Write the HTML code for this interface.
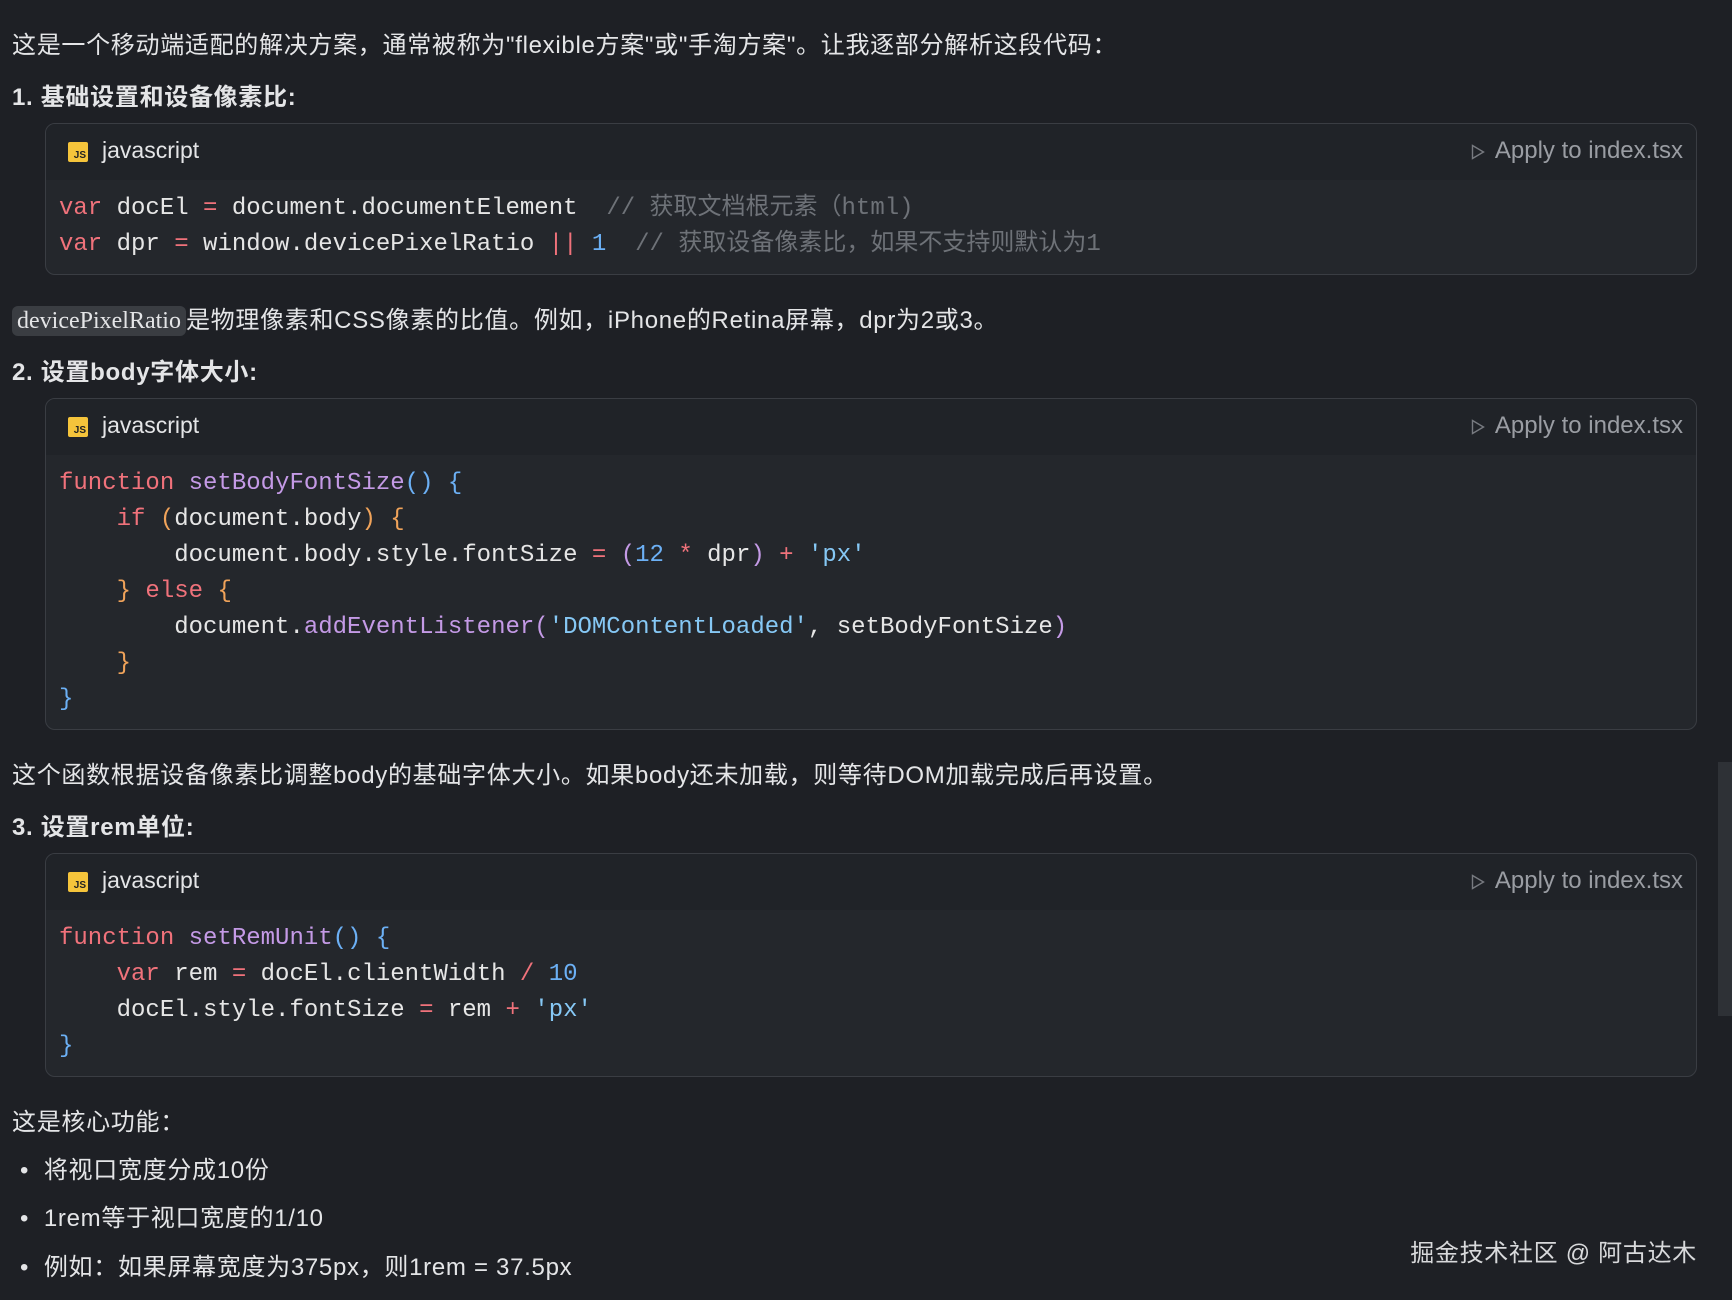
<!DOCTYPE html>
<html><head><meta charset="utf-8"><style>
*{margin:0;padding:0;box-sizing:border-box}
body{width:1732px;height:1300px;background:#1e2025;color:#e4e5e7;font-family:"Liberation Sans","Noto Sans CJK SC",sans-serif;font-size:24px;position:relative;overflow:hidden}
.t{position:absolute;left:12px;white-space:nowrap;line-height:32px;letter-spacing:0.7px}
.h{font-weight:bold}
.box{position:absolute;left:45px;width:1652px;border:1.5px solid #3a3d43;border-radius:10px;background:#24272c;overflow:hidden}
.hd{height:56px;background:#202328;position:relative}
.ic{position:absolute;left:22px;top:18px;width:20px;height:20px;background:#f5c43b;border-radius:2px;color:#222;font-size:10px;font-weight:bold;line-height:10px;text-align:right;padding-top:9px;padding-right:2px}
.lang{position:absolute;left:56px;top:13px;font-size:23px;color:#e4e5e7}
.ap{position:absolute;right:13px;top:13px;font-size:24px;color:#9a9da3}
.ap svg{vertical-align:-2px;margin-right:10px}
pre{font-family:"Liberation Mono","Noto Sans CJK SC",monospace;font-size:24px;line-height:36px;padding:11px 0 11px 13px;color:#e6e6e6}
.k{color:#f0727b}.f{color:#c49ae6}.b{color:#6cb0f5}.o{color:#f0a35a}.s{color:#86c8f5}.n{color:#6cb0f5}.c{color:#6e7278}
.chip{background:#3a3d42;border-radius:6px;padding:2px 5px;font-family:"Liberation Serif",serif;font-size:24px;letter-spacing:0}
</style></head><body>
<div class="t" style="top:30px">这是一个移动端适配的解决方案，通常被称为"flexible方案"或"手淘方案"。让我逐部分解析这段代码：</div>
<div class="t h" style="top:82px">1. 基础设置和设备像素比:</div>
<div class="box" style="top:123px">
<div class="hd"><div class="ic">JS</div><div class="lang">javascript</div><div class="ap"><svg width="14" height="16" viewBox="0 0 14 16"><path d="M1.5 1.5 L12.5 8 L1.5 14.5 Z" fill="none" stroke="#777a80" stroke-width="1.4"/></svg>Apply to index.tsx</div></div>
<pre><span class="k">var</span> docEl <span class="k">=</span> document.documentElement  <span class="c">// 获取文档根元素（html)</span>
<span class="k">var</span> dpr <span class="k">=</span> window.devicePixelRatio <span class="k">||</span> <span class="n">1</span>  <span class="c">// 获取设备像素比，如果不支持则默认为1</span></pre>
</div>
<div class="t" style="top:305px"><span class="chip">devicePixelRatio</span>是物理像素和CSS像素的比值。例如，iPhone的Retina屏幕，dpr为2或3。</div>
<div class="t h" style="top:357px">2. 设置body字体大小:</div>
<div class="box" style="top:398px">
<div class="hd"><div class="ic">JS</div><div class="lang">javascript</div><div class="ap"><svg width="14" height="16" viewBox="0 0 14 16"><path d="M1.5 1.5 L12.5 8 L1.5 14.5 Z" fill="none" stroke="#777a80" stroke-width="1.4"/></svg>Apply to index.tsx</div></div>
<pre><span class="k">function</span> <span class="f">setBodyFontSize</span><span class="b">() {</span>
    <span class="k">if</span> <span class="o">(</span>document.body<span class="o">) {</span>
        document.body.style.fontSize <span class="k">=</span> <span class="f">(</span><span class="n">12</span> <span class="k">*</span> dpr<span class="f">)</span> <span class="k">+</span> <span class="s">'px'</span>
    <span class="o">}</span> <span class="k">else</span> <span class="o">{</span>
        document.<span class="f">addEventListener</span><span class="f">(</span><span class="s">'DOMContentLoaded'</span>, setBodyFontSize<span class="f">)</span>
    <span class="o">}</span>
<span class="b">}</span></pre>
</div>
<div class="t" style="top:760px">这个函数根据设备像素比调整body的基础字体大小。如果body还未加载，则等待DOM加载完成后再设置。</div>
<div class="t h" style="top:812px">3. 设置rem单位:</div>
<div class="box" style="top:853px">
<div class="hd"><div class="ic">JS</div><div class="lang">javascript</div><div class="ap"><svg width="14" height="16" viewBox="0 0 14 16"><path d="M1.5 1.5 L12.5 8 L1.5 14.5 Z" fill="none" stroke="#777a80" stroke-width="1.4"/></svg>Apply to index.tsx</div></div>
<pre><span class="k">function</span> <span class="f">setRemUnit</span><span class="b">() {</span>
    <span class="k">var</span> rem <span class="k">=</span> docEl.clientWidth <span class="k">/</span> <span class="n">10</span>
    docEl.style.fontSize <span class="k">=</span> rem <span class="k">+</span> <span class="s">'px'</span>
<span class="b">}</span></pre>
</div>
<div class="t" style="top:1107px">这是核心功能：</div>
<div class="t" style="top:1155px;left:20px">•&nbsp; 将视口宽度分成10份</div>
<div class="t" style="top:1203px;left:20px">•&nbsp; 1rem等于视口宽度的1/10</div>
<div class="t" style="top:1252px;left:20px">•&nbsp; 例如：如果屏幕宽度为375px，则1rem = 37.5px</div>
<div class="t" style="top:1238px;left:auto;right:35px;color:#d8d9db">掘金技术社区 @ 阿古达木</div>
<div style="position:absolute;left:1718px;top:762px;width:14px;height:254px;background:#2e3136"></div>
</body></html>
